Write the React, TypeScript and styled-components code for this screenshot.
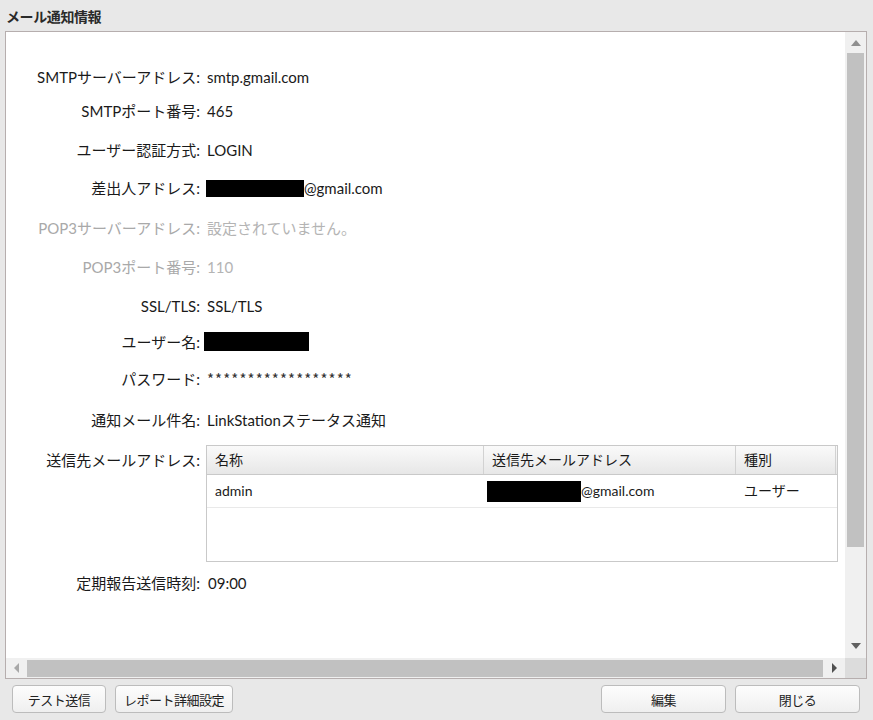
import React from "react";
import styled, { createGlobalStyle } from "styled-components";

const Global = createGlobalStyle`
  html, body { margin: 0; padding: 0; }
  body {
    background: #e8e8e8;
    font-family: Lato, "Noto Sans CJK JP", sans-serif;
    color: #1a1a1a;
  }
`;

const Page = styled.div`
  width: 873px;
  height: 720px;
  display: flex;
  flex-direction: column;
  background: #e8e8e8;
`;

const TitleBar = styled.div`
  height: 31px;
  display: flex;
  align-items: center;
  padding-left: 6px;
  font-family: "Noto Sans CJK JP", sans-serif;
  font-size: 14px;
  font-weight: bold;
  color: #2a2a2a;
  letter-spacing: -0.4px;
`;

const Panel = styled.div`
  margin: 0 6px 0 5px;
  height: 648px;
  box-sizing: border-box;
  border: 1px solid #b6aeae;
  display: grid;
  grid-template-columns: 1fr 21px;
  grid-template-rows: 1fr 20px;
  background: #f0f0f0;
`;

const Content = styled.div`
  background: #fff;
  padding-top: 35px;
  overflow: hidden;
`;

const Field = styled.div<{ $mt: number }>`
  display: grid;
  grid-template-columns: 194px 1fr;
  column-gap: 6px;
  margin-top: ${(p) => p.$mt}px;
  margin-right: 7px;
  font-size: 15px;
  line-height: 20px;
  align-items: start;
`;

const Label = styled.div<{ $dim?: boolean; $pt?: number }>`
  text-align: right;
  white-space: nowrap;
  color: ${(p) => (p.$dim ? "#a9a9a9" : "#1a1a1a")};
  padding-top: ${(p) => p.$pt ?? 0}px;
`;

const Value = styled.div<{ $dim?: boolean; $pl?: number }>`
  white-space: nowrap;
  color: ${(p) => (p.$dim ? "#b4b4b4" : "#1a1a1a")};
  padding-left: ${(p) => p.$pl ?? 1}px;
  display: flex;
  align-items: center;
`;

const Redact = styled.span<{ $w: number; $h: number; $ml?: number }>`
  display: inline-block;
  width: ${(p) => p.$w}px;
  height: ${(p) => p.$h}px;
  background: #000;
  margin-left: ${(p) => p.$ml ?? 0}px;
  flex-shrink: 0;
`;

const Stars = styled.span`
  font-family: "Noto Sans CJK JP", sans-serif;
  letter-spacing: 1.1px;
  color: #333;
`;

const Table = styled.div`
  border: 1px solid #c9c9c9;
  height: 117px;
  box-sizing: border-box;
  font-size: 14px;
  background: #fff;
  min-width: 0;
`;

const TRow = styled.div<{ $head?: boolean }>`
  display: grid;
  grid-template-columns: 277px 252px 100px 1fr;
  height: ${(p) => (p.$head ? 28 : 32)}px;
  border-bottom: 1px solid ${(p) => (p.$head ? "#c9c9c9" : "#e9e9e9")};
  background: ${(p) =>
    p.$head ? "linear-gradient(#fafafa, #e7e7e7)" : "#fff"};
`;

const Cell = styled.div<{ $sep?: boolean }>`
  display: flex;
  align-items: center;
  padding-left: 8px;
  white-space: nowrap;
  border-right: ${(p) => (p.$sep ? "1px solid #d2d2d2" : "none")};
  color: #1a1a1a;
`;

const Filler = styled.div`
  min-width: 0;
`;

const VScroll = styled.div`
  background: #f0f0f0;
  display: flex;
  flex-direction: column;
  align-items: center;
`;

const HScroll = styled.div`
  background: #f0f0f0;
  display: flex;
  align-items: center;
`;

const Corner = styled.div`
  background: #dcdcdc;
`;

const ArrowBox = styled.div<{ $w: number; $h: number }>`
  width: ${(p) => p.$w}px;
  height: ${(p) => p.$h}px;
  display: flex;
  align-items: center;
  justify-content: center;
  flex-shrink: 0;
`;

const Tri = styled.span<{ $dir: "up" | "down" | "left" | "right"; $c: string }>`
  width: 0;
  height: 0;
  ${(p) =>
    p.$dir === "up"
      ? `border-left: 5px solid transparent; border-right: 5px solid transparent; border-bottom: 6px solid ${p.$c};`
      : p.$dir === "down"
      ? `border-left: 5px solid transparent; border-right: 5px solid transparent; border-top: 6px solid ${p.$c};`
      : p.$dir === "left"
      ? `border-top: 5px solid transparent; border-bottom: 5px solid transparent; border-right: 5px solid ${p.$c};`
      : `border-top: 5px solid transparent; border-bottom: 5px solid transparent; border-left: 5px solid ${p.$c};`}
`;

const VThumb = styled.div`
  width: 17px;
  height: 494px;
  background: #c1c1c1;
`;

const HThumb = styled.div`
  height: 17px;
  width: 796px;
  background: #c1c1c1;
  margin-left: 1px;
`;

const Spacer = styled.div`
  flex: 1;
`;

const Footer = styled.div`
  display: flex;
  align-items: center;
  padding: 6px 13px 0 12px;
  gap: 9px;
`;

const Button = styled.button<{ $w: number }>`
  width: ${(p) => p.$w}px;
  height: 28px;
  box-sizing: border-box;
  border: 1px solid #bcbcbc;
  border-radius: 4px;
  background: linear-gradient(#fdfdfd, #efefef);
  font-family: "Noto Sans CJK JP", sans-serif;
  font-size: 13px;
  color: #222;
  padding: 0;
  display: flex;
  align-items: center;
  justify-content: center;
  letter-spacing: -0.5px;
`;

export default function App() {
  return (
    <Page>
      <Global />
      <TitleBar>メール通知情報</TitleBar>
      <Panel>
        <Content>
          <Field $mt={0}>
            <Label>SMTPサーバーアドレス:</Label>
            <Value>smtp.gmail.com</Value>
          </Field>
          <Field $mt={14}>
            <Label>SMTPポート番号:</Label>
            <Value>465</Value>
          </Field>
          <Field $mt={19}>
            <Label>ユーザー認証方式:</Label>
            <Value>LOGIN</Value>
          </Field>
          <Field $mt={18}>
            <Label>差出人アドレス:</Label>
            <Value $pl={0}>
              <Redact $w={98} $h={17} />
              @gmail.com
            </Value>
          </Field>
          <Field $mt={20}>
            <Label $dim>POP3サーバーアドレス:</Label>
            <Value $dim>設定されていません。</Value>
          </Field>
          <Field $mt={19}>
            <Label $dim>POP3ポート番号:</Label>
            <Value $dim>110</Value>
          </Field>
          <Field $mt={19}>
            <Label>SSL/TLS:</Label>
            <Value>SSL/TLS</Value>
          </Field>
          <Field $mt={16}>
            <Label>ユーザー名:</Label>
            <Value $pl={0}>
              <Redact $w={105} $h={19} $ml={-2} />
            </Value>
          </Field>
          <Field $mt={17}>
            <Label>パスワード:</Label>
            <Value>
              <Stars>******************</Stars>
            </Value>
          </Field>
          <Field $mt={21}>
            <Label>通知メール件名:</Label>
            <Value>LinkStationステータス通知</Value>
          </Field>
          <Field $mt={15}>
            <Label $pt={5}>送信先メールアドレス:</Label>
            <Table>
              <TRow $head>
                <Cell $sep>名称</Cell>
                <Cell $sep>送信先メールアドレス</Cell>
                <Cell $sep>種別</Cell>
                <Filler />
              </TRow>
              <TRow>
                <Cell>admin</Cell>
                <Cell>
                  <Redact $w={94} $h={21} $ml={-5} />
                  @gmail.com
                </Cell>
                <Cell>ユーザー</Cell>
                <Filler />
              </TRow>
            </Table>
          </Field>
          <Field $mt={11}>
            <Label>定期報告送信時刻:</Label>
            <Value $pl={2}>09:00</Value>
          </Field>
        </Content>
        <VScroll>
          <ArrowBox $w={21} $h={21}>
            <Tri $dir="up" $c="#8f8f8f" />
          </ArrowBox>
          <VThumb />
          <Spacer />
          <ArrowBox $w={21} $h={24}>
            <Tri $dir="down" $c="#606060" />
          </ArrowBox>
        </VScroll>
        <HScroll>
          <ArrowBox $w={20} $h={20}>
            <Tri $dir="left" $c="#a8a8a8" />
          </ArrowBox>
          <HThumb />
          <Spacer />
          <ArrowBox $w={21} $h={20}>
            <Tri $dir="right" $c="#505050" />
          </ArrowBox>
        </HScroll>
        <Corner />
      </Panel>
      <Footer>
        <Button $w={94}>テスト送信</Button>
        <Button $w={118}>レポート詳細設定</Button>
        <Spacer />
        <Button $w={125}>編集</Button>
        <Button $w={125}>閉じる</Button>
      </Footer>
    </Page>
  );
}
